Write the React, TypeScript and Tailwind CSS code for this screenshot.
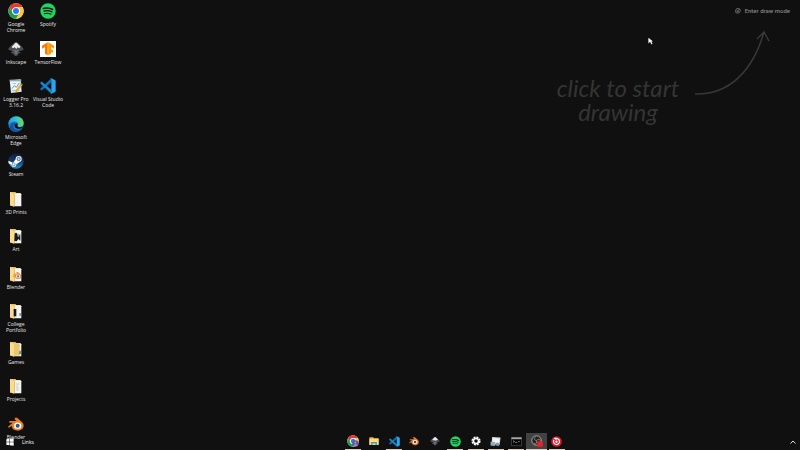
import type { ReactNode } from "react";

type IconProps = { className: string };

function ChromeIcon({ className, badge = false }: IconProps & { badge?: boolean }) {
  return (
    <svg viewBox="0 0 48 48" className={className} aria-hidden="true">
      <circle cx="24" cy="24" r="23" fill="#fff" />
      <path d="M4.1 12.5A23 23 0 0 1 43.9 12.5H24A11.5 11.5 0 0 0 14 29.8Z" fill="#e33b2e" />
      <path d="M43.9 12.5A23 23 0 0 1 24 47L34 29.8A11.5 11.5 0 0 0 24 12.5Z" fill="#fcc934" />
      <path d="M24 47A23 23 0 0 1 4.1 12.5L14 29.8A11.5 11.5 0 0 0 34 29.8Z" fill="#1e9e4a" />
      <circle cx="24" cy="24" r="11.5" fill="#fff" />
      <circle cx="24" cy="24" r="9" fill="#2a7de9" />
      {badge && (
        <g>
          <circle cx="34" cy="34" r="13" fill="#5a55a8" />
          <circle cx="34" cy="30" r="4" fill="#a898c8" />
          <path d="M26 41q8-10 16 0-8 7-16 0Z" fill="#b088a8" />
        </g>
      )}
    </svg>
  );
}

function SpotifyIcon({ className }: IconProps) {
  return (
    <svg viewBox="0 0 48 48" className={className} aria-hidden="true">
      <circle cx="24" cy="24" r="23" fill="#1ed760" />
      <g fill="none" stroke="#101010" strokeLinecap="round">
        <path d="M10 16.500q15-4.500 28 3" strokeWidth="4.500" />
        <path d="M12 24.500q13-4 24 2.500" strokeWidth="3.800" />
        <path d="M13 32q11-3 20 2" strokeWidth="3.200" />
      </g>
    </svg>
  );
}

function InkscapeIcon({ className }: IconProps) {
  return (
    <svg viewBox="0 0 48 48" className={className} aria-hidden="true">
      <path d="M24 3q3 0 6 3l15 15q4 5-2 7l-9 2q-3 2 3 4 3 2-2 3-5 0-5 4-2 4-7 4t-6-5q-2-3-6-3-4-2 0-4 5-2-1-4l-7-2q-4-3 0-7L18 6q3-3 6-3Z" fill="#4a4e53" />
      <path d="M24 5q3 0 5 3l9 9-5 5-4-3-4 5-5-5-5 3-4-4 9-10q2-3 4-3Z" fill="#e7eaed" />
      <path d="M14 27h20l-7 5 3 4-6 5-5-5 2-4Z" fill="#6c7075" />
    </svg>
  );
}

function TensorFlowIcon({ className }: IconProps) {
  return (
    <svg viewBox="0 0 48 48" className={className} aria-hidden="true">
      <path d="M0 0h48v48H0Z" fill="#fff" />
      <path d="M23 4v39l-8-5V18l-9 5v-9Z" fill="#f57c00" />
      <path d="m25 4 17 10v9l-9-5v6l6 4v8l-6-3v5l-8 5Z" fill="#ff9800" />
      <path d="M23 4h2v39h-2Z" fill="#ff9018" />
    </svg>
  );
}

function LoggerIcon({ className }: IconProps) {
  return (
    <svg viewBox="0 0 48 48" className={className} aria-hidden="true">
      <path d="m5 7 33-3 3 37-32 4Z" fill="#dce9ed" />
      <path d="m8 11 26-2 3 27-26 3Z" fill="#f7fafa" />
      <path d="M5 5h35v5H5Z" fill="#8daabb" />
      <path d="m12 32 7-9 6 5 9-13" fill="none" stroke="#4698cb" strokeWidth="3" />
      <path d="M13 17h12M12 37h22" stroke="#8b9da5" strokeWidth="2" />
      <path d="m37 18 6 4-15 19-6 3 1-7Z" fill="#e3ac43" />
      <path d="m37 18 2-3 6 4-2 3Z" fill="#4f9b59" />
    </svg>
  );
}

function CodeIcon({ className }: IconProps) {
  return (
    <svg viewBox="0 0 48 48" className={className} aria-hidden="true">
      <path d="M34 1v12L6 37q-2 1-3-1l-2-2q-1-2 1-3Z" fill="#0872b9" />
      <path d="M34 47V35L6 11q-2-1-3 1l-2 2q-1 2 1 3Z" fill="#1688d3" />
      <path d="m34 1 11 5q2 1 2 3v30q0 2-2 3l-11 5q-2 1-3-1 3 0 3-4V6q0-4-3-4 1-2 3-1Z" fill="#2ba5ef" />
    </svg>
  );
}

function EdgeIcon({ className }: IconProps) {
  return (
    <svg viewBox="0 0 48 48" className={className} aria-hidden="true">
      <defs>
        <linearGradient id="edgeTop" x1="0" x2="1">
          <stop stopColor="#2699df" />
          <stop offset="0.5" stopColor="#2fc6cf" />
          <stop offset="1" stopColor="#72db52" />
        </linearGradient>
      </defs>
      <circle cx="24" cy="24" r="23" fill="#1480cf" />
      <path d="M1 24C3-4 45-6 47 21c0 8-6 12-13 12-5 0-7-2-5-5 8-9-11-19-28-4Z" fill="url(#edgeTop)" />
      <path d="M17 25c-5 12 8 23 24 14-8 11-31 13-36-3 0-12 13-21 23-14-5-1-9-1-11 3Z" fill="#15539e" />
      <path d="M20 25q7-5 9 0c0 2-3 4 1 7q7 4 16-1-3 8-12 8c-10 0-16-6-14-14Z" fill="#101010" />
    </svg>
  );
}

function SteamIcon({ className }: IconProps) {
  return (
    <svg viewBox="0 0 48 48" className={className} aria-hidden="true">
      <defs>
        <linearGradient id="steamDisc" x1="0" x2="0" y1="0" y2="1">
          <stop stopColor="#111d35" />
          <stop offset="0.5" stopColor="#123a6c" />
          <stop offset="1" stopColor="#2490c8" />
        </linearGradient>
      </defs>
      <circle cx="24" cy="24" r="23" fill="url(#steamDisc)" />
      <path d="m1 23 14 6 8-10 9-1 3 9-10 7q0 8-8 8-6 0-7-6L2 31Z" fill="#fff" />
      <circle cx="32" cy="18" r="9" fill="#fff" />
      <circle cx="32" cy="18" r="5" fill="#c8d5e3" stroke="#173b68" strokeWidth="2" />
      <circle cx="17" cy="34" r="4.500" fill="none" stroke="#285f92" strokeWidth="2" />
    </svg>
  );
}

function BlenderShape() {
  return (
    <g>
      <path d="M22 5q3-2 6 1l14 12q6 6 5 13c-2 11-14 15-24 12-8-2-12-8-12-14l-6 5q-4 2-5-2l14-12H5q-4-2 0-5h20l-5-5q-1-3 2-5Z" fill="#ed7d20" />
      <ellipse cx="29" cy="29" rx="11" ry="9.500" fill="#fff" />
      <circle cx="29" cy="29" r="6" fill="#24568c" />
    </g>
  );
}

function BlenderIcon({ className }: IconProps) {
  return (
    <svg viewBox="0 0 48 48" className={className} aria-hidden="true">
      <BlenderShape />
    </svg>
  );
}

function FolderIcon({ className, children }: IconProps & { children?: ReactNode }) {
  return (
    <svg viewBox="0 0 48 48" className={className} aria-hidden="true">
      <path d="M6 3h16l3 3h13v38H6Z" fill="#e7bd62" />
      <path d="M20 7h17l3 3v36H18Z" fill="#f4f5f2" />
      <path d="m6 3 14 7v34l-3 3-11-5Z" fill="#fbdc8c" />
      <path d="m18 10 2 1v33l-2 2Z" fill="#d9b35b" />
      {children}
    </svg>
  );
}

function ArtFolder({ className }: IconProps) {
  return (
    <FolderIcon className={className}>
      <path d="M20 18q4-7 8 0l2 6 7-5v19l-6-5-5 7-7-1Z" fill="#17191c" />
      <path d="m28 25 4-9 3 3-2 9Z" fill="#9ca5b2" />
    </FolderIcon>
  );
}

function BlenderFolder({ className }: IconProps) {
  return (
    <FolderIcon className={className}>
      <g transform="translate(14 15) scale(.55)" opacity=".85">
        <BlenderShape />
      </g>
    </FolderIcon>
  );
}

function PortfolioFolder({ className }: IconProps) {
  return (
    <FolderIcon className={className}>
      <path d="M17 18h8v22h-8Z" fill="#191919" />
      <path d="M34 30h5v9h-5Z" fill="#7f9fb8" />
    </FolderIcon>
  );
}

function GamesFolder({ className }: IconProps) {
  return (
    <FolderIcon className={className}>
      <path d="M19 7h16v37H19Z" fill="#eac66f" />
      <path d="M34 29h5v11h-7Z" fill="#729c76" />
    </FolderIcon>
  );
}

function ProjectsFolder({ className }: IconProps) {
  return (
    <FolderIcon className={className}>
      <path d="M24 18h10M24 24h7M24 30h10M24 36h8" stroke="#b4b5b1" strokeWidth="2" />
    </FolderIcon>
  );
}

function ExplorerIcon({ className }: IconProps) {
  return (
    <svg viewBox="0 0 48 48" className={className} aria-hidden="true">
      <path d="M2 6h18l4 5h22v31H2Z" fill="#e9ae36" />
      <path d="M2 13h44v30H2Z" fill="#ffdc7c" />
      <path d="M10 29h28v14h-7v-7H17v7h-7Z" fill="#4499d5" />
    </svg>
  );
}

function GearIcon({ className }: IconProps) {
  return (
    <svg viewBox="0 0 48 48" className={className} aria-hidden="true">
      <circle cx="24" cy="24" r="18" fill="none" stroke="#fff" strokeWidth="8" strokeDasharray="9.400 4.737" />
      <circle cx="24" cy="24" r="12" fill="none" stroke="#fff" strokeWidth="7" />
    </svg>
  );
}

function NotesIcon({ className }: IconProps) {
  return (
    <svg viewBox="0 0 48 48" className={className} aria-hidden="true">
      <path d="m9 4 37 3-4 32-35-4Z" fill="#c8d5de" />
      <path d="m13 9 29 3-3 21-29-3Z" fill="#f1f4f5" />
      <path d="m3 24 20 2-1 18-20-3Z" fill="#9aabba" />
      <path d="m27 29 15 2-3 13-15-3Z" fill="#8297a6" />
    </svg>
  );
}

function TerminalIcon({ className }: IconProps) {
  return (
    <svg viewBox="0 0 48 48" className={className} aria-hidden="true">
      <path d="M2 6h44v36H2Z" fill="#050505" stroke="#73777b" strokeWidth="2" />
      <path d="M2 6h44v8H2Z" fill="#a5a9ad" />
      <path d="m9 20 6 4-6 4M18 28h9M31 24h7" fill="none" stroke="#ddd" strokeWidth="2.500" />
    </svg>
  );
}

function RecorderIcon({ className }: IconProps) {
  return (
    <svg viewBox="0 0 48 48" className={className} aria-hidden="true">
      <circle cx="22" cy="22" r="19" fill="#242424" stroke="#a8a8a8" strokeWidth="4" />
      <path d="M22 22C13 22 11 14 18 9M23 22c5-7 14-5 15 3M22 23c4 8-2 15-10 12" fill="none" stroke="#8c8c8c" strokeWidth="4" />
      <rect x="25" y="25" width="22" height="22" rx="5" fill="#ee2026" />
    </svg>
  );
}

function CaptureIcon({ className }: IconProps) {
  return (
    <svg viewBox="0 0 48 48" className={className} aria-hidden="true">
      <circle cx="24" cy="24" r="23" fill="#d71b27" />
      <path d="M13 17a13 13 0 1 0 9-6" fill="none" stroke="#fff" strokeWidth="5" />
      <path d="m10 9 15-3-1 13Z" fill="#fff" />
      <circle cx="24" cy="25" r="5" fill="#fff" />
    </svg>
  );
}

function WindowsIcon({ className }: IconProps) {
  return (
    <svg viewBox="0 0 48 48" className={className} aria-hidden="true">
      <path d="m2 8 18-3v17H2Zm21-3 23-4v21H23ZM2 25h18v18L2 40Zm21 0h23v22l-23-4Z" fill="#fff" />
    </svg>
  );
}

type Icon = (props: IconProps) => ReactNode;
type Shortcut = { label: string; icon: Icon };

const firstColumn: Shortcut[] = [
  { label: "Google Chrome", icon: ChromeIcon },
  { label: "Inkscape", icon: InkscapeIcon },
  { label: "Logger Pro 3.16.2", icon: LoggerIcon },
  { label: "Microsoft Edge", icon: EdgeIcon },
  { label: "Steam", icon: SteamIcon },
  { label: "3D Prints", icon: FolderIcon },
  { label: "Art", icon: ArtFolder },
  { label: "Blender", icon: BlenderFolder },
  { label: "College Portfolio", icon: PortfolioFolder },
  { label: "Games", icon: GamesFolder },
  { label: "Projects", icon: ProjectsFolder },
  { label: "Blender", icon: BlenderIcon },
];

const secondColumn: Shortcut[] = [
  { label: "Spotify", icon: SpotifyIcon },
  { label: "TensorFlow", icon: TensorFlowIcon },
  { label: "Visual Studio Code", icon: CodeIcon },
];

const tasks: { name: string; icon: ReactNode; running?: boolean; active?: boolean }[] = [
  { name: "Google Chrome", icon: <ChromeIcon className="size-3" badge />, running: true },
  { name: "File Explorer", icon: <ExplorerIcon className="size-2.5" /> },
  { name: "Visual Studio Code", icon: <CodeIcon className="size-[11px]" />, running: true },
  { name: "Blender", icon: <BlenderIcon className="size-2.5" /> },
  { name: "Inkscape", icon: <InkscapeIcon className="size-2.5" /> },
  { name: "Spotify", icon: <SpotifyIcon className="size-[11px]" />, running: true },
  { name: "Settings", icon: <GearIcon className="size-2.5" />, running: true },
  { name: "Notes", icon: <NotesIcon className="size-[11px]" />, running: true },
  { name: "Terminal", icon: <TerminalIcon className="size-[11px]" />, running: true },
  { name: "Recorder", icon: <RecorderIcon className="size-3" />, running: true, active: true },
  { name: "Capture", icon: <CaptureIcon className="size-[11px]" />, running: true },
];

function ShortcutColumn({ items }: { items: Shortcut[] }) {
  return (
    <ul className="grid h-full w-8 grid-rows-12">
      {items.map(({ label, icon: Glyph }, index) => (
        <li key={index} className="min-h-0">
          <button type="button" className="flex w-full flex-col items-center gap-0.5 pt-[3px]">
            <Glyph className="size-4" />
            <span className="w-full text-center text-[5px] leading-[6px] text-[#e8e8e8]">{label}</span>
          </button>
        </li>
      ))}
    </ul>
  );
}

export default function App() {
  return (
    <div className="relative h-screen overflow-hidden bg-[#101010] font-['Open_Sans','Noto_Sans',sans-serif] text-white">
      <main className="flex h-full justify-between">
        <nav aria-label="Desktop" className="flex h-full">
          <ShortcutColumn items={firstColumn} />
          <ShortcutColumn items={secondColumn} />
        </nav>
        <section className="flex flex-col items-end pt-1.5 pr-2.5">
          <button
            type="button"
            className="flex items-center gap-1 font-['Roboto',sans-serif] text-[6px] leading-[10px] font-medium text-[#858585]"
          >
            <svg viewBox="0 0 16 16" className="size-1.5" fill="none" stroke="currentColor" strokeWidth="2" aria-hidden="true">
              <path d="M3 3q5-4 10 0 3 5-1 9-5 4-10 0-1-5 1-9Z" />
              <path d="m6 10 6-7M6 6v4h4" />
            </svg>
            Enter draw mode
          </button>
          <div className="flex items-end gap-2 pt-3 pr-5">
            <p className="-mb-1 w-34 text-center font-['Lato',sans-serif] text-[24px] leading-6 text-[#343434] italic">
              click to start drawing
            </p>
            <svg viewBox="0 0 76 92" className="h-[92px] w-[76px]" fill="none" stroke="#383838" strokeWidth="1.500" aria-hidden="true">
              <path d="M1 66C36 67 59 42 70 4M63 11l7-7 5 9" />
            </svg>
          </div>
        </section>
      </main>

      <svg viewBox="0 0 12 18" className="absolute top-[37px] left-[81%] h-2 w-[5px]" aria-hidden="true">
        <path d="M1 1v14l4-4 3 6 3-1-3-6h4Z" fill="#fff" />
      </svg>

      <footer className="absolute inset-x-0 bottom-0 flex h-[17px] items-stretch">
        <div className="flex w-[42.9%] items-center gap-2 pl-1.5">
          <button type="button" aria-label="Start">
            <WindowsIcon className="size-2" />
          </button>
          <button type="button" className="text-[5px] leading-[6px]">
            Links
          </button>
        </div>
        <div className="grid w-56 grid-cols-11">
          {tasks.map(({ name, icon, running, active }) => (
            <button
              key={name}
              type="button"
              aria-label={name}
              className={`flex flex-col items-center justify-between ${active ? "bg-[#424242]" : ""}`}
            >
              <span className="flex flex-1 items-center">{icon}</span>
              <span className={`h-px ${active ? "w-full" : "w-4"} ${running ? "bg-[#d8ccc0]" : ""}`} />
            </button>
          ))}
        </div>
        <div className="flex flex-1 items-center justify-end pr-1">
          <button type="button" aria-label="Show hidden icons">
            <svg viewBox="0 0 12 12" className="size-1.5" fill="none" stroke="#ddd" strokeWidth="2" aria-hidden="true">
              <path d="m1 9 5-5 5 5" />
            </svg>
          </button>
        </div>
      </footer>
    </div>
  );
}
